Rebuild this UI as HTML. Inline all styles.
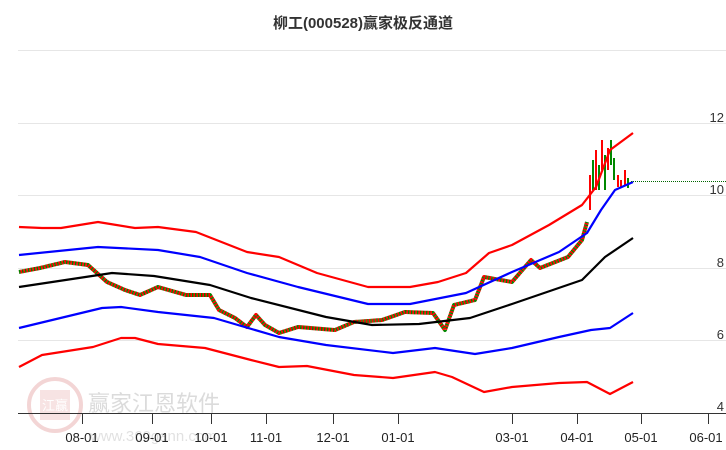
<!DOCTYPE html><html><head><meta charset="utf-8"><style>
body{margin:0;background:#fff;width:726px;height:450px;overflow:hidden;font-family:"Liberation Sans","Noto Sans CJK SC",sans-serif}
</style></head><body>
<svg width="726" height="450" xmlns="http://www.w3.org/2000/svg" style="position:absolute;left:0;top:0">
<g stroke="#e6e6e6" stroke-width="1">
<line x1="18" y1="50.5" x2="726" y2="50.5"/><line x1="18" y1="123.5" x2="726" y2="123.5"/><line x1="18" y1="195.5" x2="726" y2="195.5"/><line x1="18" y1="268.5" x2="726" y2="268.5"/><line x1="18" y1="340.5" x2="726" y2="340.5"/>
</g>
<g font-size="13" fill="#333" font-family="Liberation Sans,sans-serif" text-anchor="end">
<text x="724" y="122">12</text><text x="724" y="194">10</text><text x="724" y="267">8</text><text x="724" y="339">6</text><text x="724" y="411">4</text>
</g>
<g opacity="0.35">
<circle cx="55" cy="405" r="26" fill="none" stroke="#d88" stroke-width="4"/>
<rect x="40" y="390" width="30" height="30" fill="#e9b0b0"/>
<text x="55" y="410" font-size="13" fill="#fff" text-anchor="middle" font-family="Noto Sans CJK SC">江赢</text>
<text x="88" y="411" font-size="22" fill="#999" font-family="Noto Sans CJK SC">赢家江恩软件</text>
<text x="90" y="441" font-size="15" fill="#aaa">www.360gann.com</text>
</g>
<text x="363" y="28" font-size="15" font-weight="bold" fill="#333" text-anchor="middle" font-family="Liberation Sans,Noto Sans CJK SC,sans-serif">柳工(000528)赢家极反通道</text>
<g fill="none" stroke-width="4" stroke-linejoin="round">
<polyline stroke="#080" stroke-dasharray="1.6 1.4" points="19,272 40,268 65,262 88,265 107,282 125,290 140,295 158,287 186,295 210,295 219,310 235,318 247,327 256,315 265,325 279,333 298,327 335,330 354,322 382,320 405,312 433,313 445,330 454,305 475,300 484,277 512,282 531,260 540,268 568,257 582,240 587,222"/>
<polyline stroke="#f00" stroke-dasharray="1.6 1.4" stroke-dashoffset="1.5" points="19,272 40,268 65,262 88,265 107,282 125,290 140,295 158,287 186,295 210,295 219,310 235,318 247,327 256,315 265,325 279,333 298,327 335,330 354,322 382,320 405,312 433,313 445,330 454,305 475,300 484,277 512,282 531,260 540,268 568,257 582,240 587,222"/>
</g>
<g>
<rect x="589" y="175" width="2" height="35" fill="#f00"/><rect x="592" y="160" width="2" height="30" fill="#080"/>
<rect x="595" y="150" width="2" height="40" fill="#f00"/><rect x="598" y="165" width="2" height="25" fill="#080"/>
<rect x="601" y="140" width="2" height="30" fill="#f00"/><rect x="604" y="155" width="2" height="35" fill="#080"/>
<rect x="607" y="148" width="2" height="22" fill="#f00"/><rect x="610" y="140" width="2" height="25" fill="#080"/>
<rect x="613" y="158" width="2" height="22" fill="#080"/><rect x="617" y="175" width="2" height="12" fill="#f00"/>
<rect x="620" y="180" width="2" height="8" fill="#f00"/><rect x="624" y="170" width="2" height="15" fill="#f00"/>
<rect x="627" y="178" width="2" height="10" fill="#080"/>
</g>
<g fill="none" stroke-width="2.2" stroke-linejoin="round">
<polyline stroke="#f00" points="19,227 42,228 61,228 98,222 135,228 158,227 196,232 247,252 279,257 317,273 368,287 410,287 438,282 466,273 489,253 512,245 549,225 582,205 596,187 610,150 633,133"/>
<polyline stroke="#00f" points="19,255 98,247 158,250 200,257 247,273 298,287 368,304 410,304 466,293 512,272 559,252 587,233 601,210 615,190 633,182"/>
<polyline stroke="#000" points="19,287 112,273 154,276 210,285 251,298 326,317 372,325 419,324 470,318 512,304 582,280 605,257 633,238"/>
<polyline stroke="#00f" points="19,328 102,308 121,307 158,312 214,318 279,337 326,345 393,353 435,348 475,354 512,348 559,337 591,330 610,328 633,313"/>
<polyline stroke="#f00" points="19,367 42,355 93,347 121,338 135,338 158,344 205,348 251,360 279,367 307,366 354,375 393,378 435,372 452,377 484,392 512,387 559,383 587,382 610,394 633,382"/>
</g>
<line x1="631" y1="181.5" x2="726" y2="181.5" stroke="#060" stroke-dasharray="1,1"/>
<line x1="18" y1="413.5" x2="726" y2="413.5" stroke="#333"/>
<g stroke="#333"><line x1="82.5" y1="413" x2="82.5" y2="424"/><line x1="152.5" y1="413" x2="152.5" y2="424"/><line x1="211.5" y1="413" x2="211.5" y2="424"/><line x1="266.5" y1="413" x2="266.5" y2="424"/><line x1="333.5" y1="413" x2="333.5" y2="424"/><line x1="398.5" y1="413" x2="398.5" y2="424"/><line x1="512.5" y1="413" x2="512.5" y2="424"/><line x1="577.5" y1="413" x2="577.5" y2="424"/><line x1="641.5" y1="413" x2="641.5" y2="424"/><line x1="708.5" y1="413" x2="708.5" y2="424"/></g>
<g font-size="13" fill="#222" text-anchor="middle">
<text x="82" y="442">08-01</text><text x="152" y="442">09-01</text><text x="211" y="442">10-01</text><text x="266" y="442">11-01</text><text x="333" y="442">12-01</text><text x="398" y="442">01-01</text><text x="512" y="442">03-01</text><text x="577" y="442">04-01</text><text x="641" y="442">05-01</text><text x="706" y="442">06-01</text>
</g>
</svg>
</body></html>
